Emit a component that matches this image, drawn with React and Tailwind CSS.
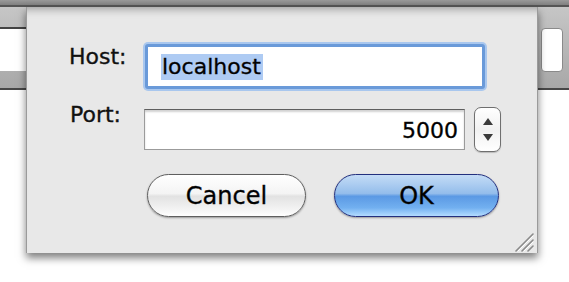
import React from 'react';

const ResizeGrip = () => (
  <svg width="22" height="22" viewBox="0 0 22 22">
    <g stroke="#8a8a8a" strokeWidth="1.6" strokeLinecap="round">
      <line x1="4" y1="21" x2="21" y2="4" />
      <line x1="10" y1="21" x2="21" y2="10" />
      <line x1="16" y1="21" x2="21" y2="16" />
    </g>
    <g stroke="#ffffff" strokeWidth="1" strokeLinecap="round">
      <line x1="6" y1="21" x2="21" y2="6" />
      <line x1="12" y1="21" x2="21" y2="12" />
    </g>
  </svg>
);

const Stepper = () => (
  <div className="ml-[9px] w-[27px] h-[45px] flex flex-col items-center justify-center rounded-[7px] border border-[#6f6f6f] bg-gradient-to-b from-white via-[#f1f1f1] to-white shadow-[0_1px_1px_rgba(0,0,0,0.2)]">
    <svg width="10" height="7" viewBox="0 0 10 7" className="mb-[9px]">
      <polygon points="5,0 10,7 0,7" fill="#3a3a3a" />
    </svg>
    <svg width="10" height="7" viewBox="0 0 10 7">
      <polygon points="0,0 10,0 5,7" fill="#3a3a3a" />
    </svg>
  </div>
);

export default function App() {
  return (
    <div className="relative w-[569px] h-[282px] overflow-hidden bg-white font-['DejaVu_Sans',sans-serif] [-webkit-text-stroke:0.35px_#111]">
      {/* window behind the sheet */}
      <div className="h-[5px] bg-gradient-to-b from-[#9a9a9a] to-[#808080]" />
      <div className="h-[2px] bg-[#555]" />
      <div className="h-[83px] flex items-start justify-between pt-[20px] bg-gradient-to-b from-[#c6c6c6] to-[#a8a8a8] border-b-2 border-[#474747]">
        <div className="-ml-[20px] w-[46px] h-[44px] bg-white border-t-2 border-[#444]" />
        <div className="mr-[6px] mt-[1px] w-[22px] h-[44px] bg-white rounded-[4px] border border-[#8a8a8a]" />
      </div>

      {/* sheet dialog */}
      <div className="absolute left-[26px] top-[7px] w-[512px] h-[246px] bg-[#e8e8e8] border-x border-[#9a9a9a] shadow-[inset_0_10px_8px_-8px_rgba(0,0,0,0.35),0_5px_8px_rgba(0,0,0,0.5)] pt-[37px] pl-[42px]">
        {/* Host */}
        <div className="flex items-start">
          <div className="w-[76px] text-[22px] leading-[26px] text-[#111]">Host:</div>
          <div className="w-[340px] h-[45px] rounded-[3px] border-[3px] border-[#6a9ad9] ring-2 ring-[#a9c7ee] bg-white flex items-center pl-[13px]">
            <span className="bg-[#aecbf3] text-[22px] leading-[26px] text-black pl-[1px] pr-[2px]">localhost</span>
          </div>
        </div>

        {/* Port */}
        <div className="flex items-center mt-[20px] h-[41px]">
          <div className="w-[74px] ml-[1px] self-start -mt-[7px] text-[22px] leading-[26px] text-[#111]">Port:</div>
          <div className="w-[321px] h-[41px] bg-white border border-[#9b9b9b] border-t-[#5f5f5f] shadow-[inset_0_2px_2px_rgba(0,0,0,0.18)] flex items-center justify-end pr-[6px] pt-[3px]">
            <span className="text-[22px] leading-[26px] text-black">5000</span>
          </div>
          <Stepper />
        </div>

        {/* Buttons */}
        <div className="flex items-center mt-[24px] ml-[78px] gap-[28px]">
          <button className="w-[159px] h-[43px] rounded-full border border-[#5f5f5f] bg-[linear-gradient(to_bottom,#ffffff_0%,#f4f4f4_45%,#e2e2e2_52%,#f4f4f4_85%,#ffffff_100%)] shadow-[0_1px_2px_rgba(0,0,0,0.35)] text-[24px] leading-[28px] text-black">
            Cancel
          </button>
          <button className="w-[165px] h-[43px] rounded-full border border-[#23307e] bg-[linear-gradient(to_bottom,#c4dcf6_0%,#94bdeb_45%,#5b99e4_52%,#72b0f0_80%,#b3dcff_100%)] shadow-[0_1px_2px_rgba(0,0,0,0.35)] text-[24px] leading-[28px] text-black">
            OK
          </button>
        </div>

        <div className="flex justify-end mt-[13px] pr-[3px]">
          <ResizeGrip />
        </div>
      </div>
    </div>
  );
}
